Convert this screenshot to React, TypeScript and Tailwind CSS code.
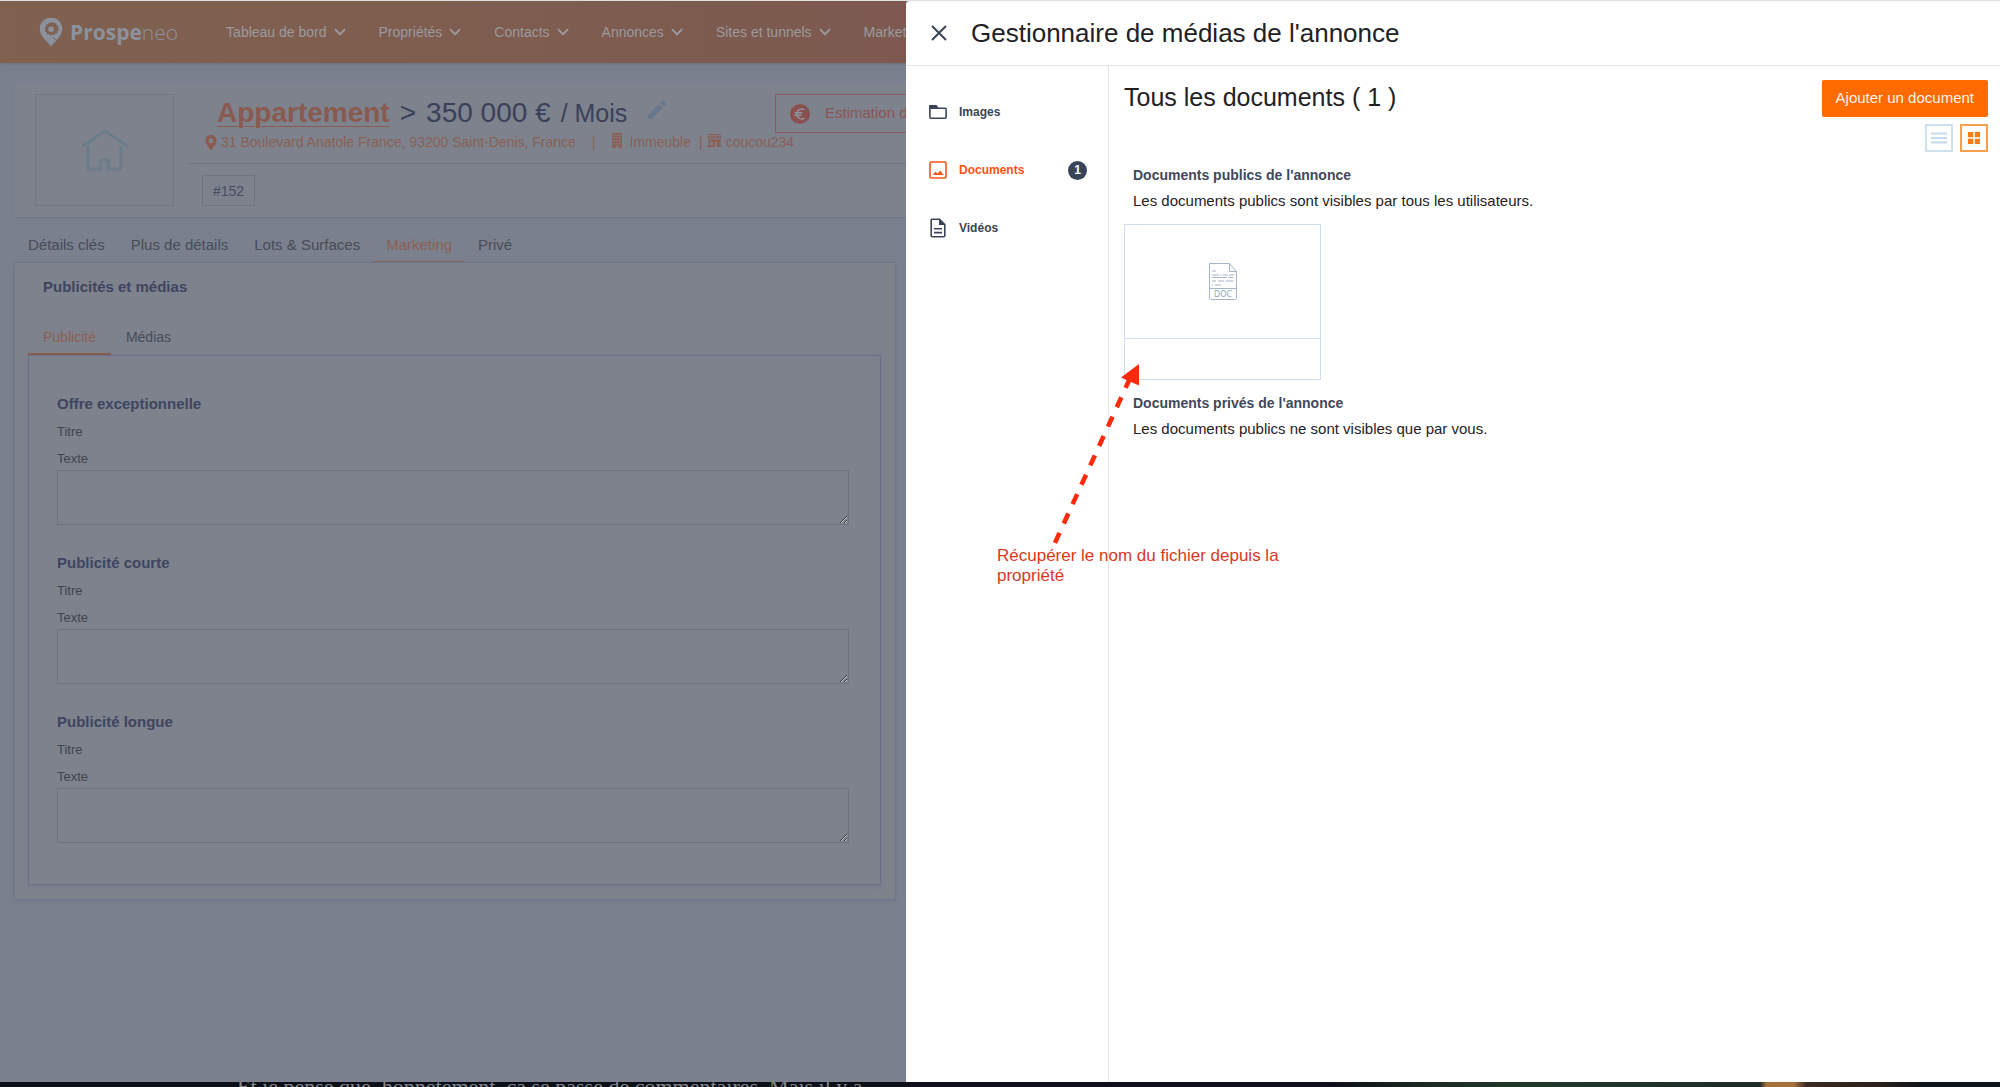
import React from 'react';
import { MdEdit } from 'react-icons/md';
import { FaMapMarkerAlt } from 'react-icons/fa';

const navItems = ['Tableau de bord', 'Propriétés', 'Contacts', 'Annonces', 'Sites et tunnels', 'Marketing'];
const tabs = ['Détails clés', 'Plus de détails', 'Lots & Surfaces', 'Marketing', 'Privé'];
const sections = ['Offre exceptionnelle', 'Publicité courte', 'Publicité longue'];

function Chevron() {
  return (
    <svg viewBox="0 0 12 8" className="h-2 w-3 shrink-0" fill="none" stroke="currentColor" strokeWidth="1.900" aria-hidden="true">
      <path d="M1 1.2 6 6.4 11 1.2" />
    </svg>
  );
}

function Logo() {
  return (
    <a href="#" className="flex shrink-0 items-center gap-[7px] text-[#8b929e]">
      <svg viewBox="0 0 24 30" className="h-[30px] w-6" aria-hidden="true">
        <path
          fill="currentColor"
          d="M12 .8C5.7.8.8 5.7.8 11.6c0 4 2 7.300 4.300 10.200L12 29.300l6.900-7.500c2.300-2.900 4.300-6.200 4.300-10.200C23.200 5.700 18.300.8 12 .8Z"
        />
        <path
          fill="#80614f"
          d="m10.500 5 1.500 1 1.500-1.200 1.300 1.500 2.200-.2.400 2 2 .8-.5 2 1.300 1.600-1.700 1.300.1 2.200-2.100.2-1 1.900-2-.7-1.700 1.300-1.400-1.500-2.200.2-.4-2-2-1 .8-1.900-1.100-1.800 1.600-1.300.1-2.200 2.100-.1z"
        />
        <circle cx="12" cy="12.200" r="2.800" fill="currentColor" />
        <path d="m13.500 20 5 4" stroke="#80614f" strokeWidth="1" />
      </svg>
      <span className="text-[21px] leading-7 [font-family:'Open_Sans',sans-serif]">
        <span className="font-bold">Prospe</span>
        <span className="font-light">neo</span>
      </span>
    </a>
  );
}

function TopNav() {
  return (
    <header className="flex h-[62px] shrink-0 items-center gap-12 bg-linear-to-r from-[#80614f] to-[#7d594f] pl-[39px] text-sm text-[#9b9a9e] shadow-sm">
      <Logo />
      <nav className="flex items-center gap-[33px]">
        {navItems.map((item) => (
          <button key={item} type="button" className="flex items-center gap-[7px]">
            {item}
            <Chevron />
          </button>
        ))}
      </nav>
    </header>
  );
}

function HouseIcon() {
  return (
    <svg viewBox="0 0 46 42" className="w-[46px]" fill="none" stroke="#6c7c8a" strokeWidth="3" strokeLinecap="round" strokeLinejoin="round" aria-hidden="true">
      <path d="M1.500 16.500 23 2l21.500 14.500M6 18.500V40h12.500V31h8v9H39V18.500" />
    </svg>
  );
}

function BuildingIcon() {
  return (
    <svg viewBox="0 0 10 15" className="mb-1 h-[15px] w-2.5 shrink-0" aria-hidden="true">
      <path
        fill="currentColor"
        fillRule="evenodd"
        d="M0 0h10v15H6.200v-2H3.800v2H0zM1.500 1.500V3H3V1.500zm2.800 0V3h1.500V1.500zm2.700 0V3h1.500V1.500zM1.500 4.300v1.500H3V4.300zm2.800 0v1.500h1.500V4.300zm2.700 0v1.500h1.500V4.300zM1.500 7.100v1.500H3V7.100zm2.800 0v1.500h1.500V7.100zm2.700 0v1.500h1.500V7.100zM1.500 9.900v1.500H3V9.900zm2.800 0v1.500h1.500V9.900zm2.700 0v1.500h1.500V9.900z"
      />
    </svg>
  );
}

function StoreIcon() {
  return (
    <svg viewBox="0 0 15 13" className="mx-1 mb-1 h-[13px] w-[15px] shrink-0" fill="currentColor" aria-hidden="true">
      <path d="M.8 0h13.400v1.200H.8zM.8 2h2v2.500h-2zM3.600 2h2.200v2.500H3.600zM6.500 2h2v2.500h-2zM9.200 2h2.200v2.500H9.200zM12.200 2h2v2.500h-2z" />
      <path fillRule="evenodd" d="M1.500 5.200h12V12H15v1h-5.200V8H8v5H0v-1h1.500zM3 8v3h3V8z" />
    </svg>
  );
}

function PropertyCard() {
  return (
    <section className="ml-3.5 mt-[21px] flex h-[133px] shrink-0 bg-[#7d828d] pl-[21px] pt-2.5 shadow-[0_1px_2px_#6f7b8c]">
      <div className="flex h-[112px] w-[139px] shrink-0 items-center justify-center border border-[#6e7887]">
        <HouseIcon />
      </div>
      <div className="ml-3.5 min-w-0 flex-1">
        <div className="flex h-[70px] items-start justify-between border-b border-[#6f7581] pl-[17px]">
          <div className="min-w-0">
            <h1 className="flex items-baseline gap-2.5 pl-3 text-[28px] leading-[38px] text-[#3a405a]">
              <a href="#" className="font-bold text-[#8a5a50] underline decoration-1 underline-offset-4">Appartement</a>
              <span>&gt;</span>
              <span>350 000 €</span>
              <span className="text-[25px]">/ Mois</span>
              <button type="button" aria-label="Modifier" className="ml-2 text-[#68778c]">
                <MdEdit className="size-6" />
              </button>
            </h1>
            <p className="flex items-center text-sm leading-5 text-[#8a6054]">
              <FaMapMarkerAlt className="mr-1 size-[15px] w-3 shrink-0 text-[#8a5a50]" />
              <a href="#">31 Boulevard Anatole France, 93200 Saint-Denis, France</a>
              <span className="mx-4">|</span>
              <BuildingIcon />
              <span className="ml-2">Immeuble</span>
              <span className="ml-2">|</span>
              <StoreIcon />
              <span>coucou234</span>
            </p>
          </div>
          <button type="button" className="-mr-10 flex h-[39px] w-[171px] shrink-0 items-center gap-[15px] border border-[#8c5a58] pl-3.5 text-[15px] text-[#8a5654]">
            <svg viewBox="0 0 20 20" className="size-5 shrink-0" aria-hidden="true">
              <circle cx="10" cy="10" r="10" fill="#8a504f" />
              <path d="M14.500 5.800A5 5 0 0 0 6.800 10a5 5 0 0 0 7.700 4.200M4.500 8.800h7.800M4.500 11.300h7.200" fill="none" stroke="#8d929c" strokeWidth="1.500" />
            </svg>
            Estimation du bien
          </button>
        </div>
        <span className="ml-3.5 mt-[11px] inline-flex h-[31px] items-center border border-[#6e7482] px-2.5 text-sm text-[#474d63]">#152</span>
      </div>
    </section>
  );
}

function AdSection({ title }: { title: string }) {
  return (
    <section className="flex flex-col text-[13px] text-[#40444f]">
      <h3 className="mb-[5px] text-[15px] font-bold leading-6 text-[#3f4560]">{title}</h3>
      <p className="mb-[5px] leading-[22px]">Titre</p>
      <label className="flex flex-col leading-[22px]">
        Texte
        <textarea className="h-[55px] resize-y border border-[#6d7280] bg-transparent" />
      </label>
    </section>
  );
}

function PropertyPage() {
  return (
    <div className="flex min-w-0 flex-1 flex-col overflow-hidden whitespace-nowrap bg-[#7b808e]">
      <TopNav />
      <PropertyCard />
      <div role="tablist" className="mt-[9px] flex pl-[15px] text-[15px] leading-[37px] text-[#474c59]">
        {tabs.map((tab) => (
          <button
            key={tab}
            type="button"
            role="tab"
            aria-selected={tab === 'Marketing'}
            className={
              tab === 'Marketing'
                ? 'h-[37px] border-b-2 border-[#895f53] px-[13px] text-[#8c6053]'
                : 'h-[37px] border-b-2 border-transparent px-[13px]'
            }
          >
            {tab}
          </button>
        ))}
      </div>
      <section className="ml-3.5 mr-2.5 -mt-px border border-[#6e788a] bg-[#7d828d] pb-3.5 pl-[13px] pr-3.5 pt-3 shadow-[0_1px_3px_#70778a]">
        <h2 className="pl-[15px] text-[15px] font-bold leading-6 text-[#3f4560]">Publicités et médias</h2>
        <div role="tablist" className="mt-[19px] flex text-sm leading-[38px] text-[#474c59]">
          <button type="button" role="tab" aria-selected="true" className="h-[37px] border-b-2 border-[#875c4e] px-[15px] text-[#8c6053]">Publicité</button>
          <button type="button" role="tab" aria-selected="false" className="h-[37px] border-b-2 border-transparent px-[15px]">Médias</button>
        </div>
        <div className="flex flex-col gap-[26px] border border-[#697088] pb-[41px] pl-7 pr-[31px] pt-9 shadow-[0_1px_4px_#72788a]">
          {sections.map((title) => (
            <AdSection key={title} title={title} />
          ))}
        </div>
      </section>
    </div>
  );
}

function FolderIcon() {
  return (
    <svg viewBox="0 0 18 14" className="h-3.5 w-[18px]" aria-hidden="true">
      <path d="M1.800 3.200h14.400a.9.900 0 0 1 .9.900v8.200a.9.900 0 0 1-.9.900H1.800a.9.900 0 0 1-.9-.9V2z" fill="none" stroke="currentColor" strokeWidth="1.600" />
      <path d="M1.500.1h6L9.300 2.400V4H.1V1.500A1.400 1.400 0 0 1 1.500.1Z" fill="currentColor" />
    </svg>
  );
}

function ImageIcon() {
  return (
    <svg viewBox="0 0 18 18" className="size-[18px]" aria-hidden="true">
      <rect x="1" y="1" width="16" height="16" rx="1" fill="none" stroke="currentColor" strokeWidth="1.600" />
      <path d="m3.800 14 2.700-3.400L8.600 12.800 11.200 9.400 14.600 14z" fill="currentColor" />
    </svg>
  );
}

function FileIcon() {
  return (
    <svg viewBox="0 0 16 20" className="mx-px h-5 w-4" aria-hidden="true">
      <path d="M2 1.200h7.500L14.800 6.500V17.800a1 1 0 0 1-1 1H2.200a1 1 0 0 1-1-1V2a.8.8 0 0 1 .8-.8Z" fill="none" stroke="currentColor" strokeWidth="1.600" />
      <path d="M9 1v6h6z" fill="currentColor" />
      <path d="M4 10.800h8M4 14.600h8" stroke="currentColor" strokeWidth="1.600" />
    </svg>
  );
}

function DocIcon() {
  return (
    <svg viewBox="0 0 28 37" className="h-[37px] w-7" fill="none" stroke="#a3b5ca" aria-hidden="true">
      <path d="M.5 35.500V.5h20l7 8v27c0 .600-.4 1-1 1h-25a1 1 0 0 1-1-1ZM20.500.5v8h7M.5 25.500h27" />
      <path d="M3 8h4M3 12h7M11.500 12h1M14 12h5M20 12h5M3 14.500h15M19.500 14.500h5M3 18h4M9 18h6M16.500 18h8M3 22h1M6 22h6" />
      <text x="14" y="34" textAnchor="middle" fill="#93a8c1" stroke="none" fontSize="8" className="[font-family:'DejaVu_Sans',sans-serif]">DOC</text>
    </svg>
  );
}

function DrawerNav() {
  return (
    <nav className="flex w-[203px] shrink-0 flex-col gap-[38px] border-r border-[#e2e4e8] pl-[23px] pr-[21px] pt-9 text-xs font-bold text-[#3a4459]">
      <button type="button" className="flex h-5 items-center gap-3">
        <FolderIcon />
        Images
      </button>
      <button type="button" className="flex h-5 items-center gap-3 text-[#fb5412]">
        <ImageIcon />
        Documents
        <span className="ml-auto flex size-[19px] items-center justify-center rounded-full bg-[#3a4459] text-white">1</span>
      </button>
      <button type="button" className="flex h-5 items-center gap-3">
        <FileIcon />
        Vidéos
      </button>
    </nav>
  );
}

function DocumentGroup({ title, text, children }: { title: string; text: string; children?: React.ReactNode }) {
  return (
    <section>
      <h3 className="pl-[9px] text-sm font-bold leading-[26px] text-[#3f485b]">{title}</h3>
      <p className="pl-[9px] text-[15px] leading-[26px] text-[#1f2124]">{text}</p>
      {children}
    </section>
  );
}

function Annotation() {
  return (
    <>
      <svg viewBox="0 0 90 184" className="absolute left-[143px] top-[361px] h-[184px] w-[90px]" aria-hidden="true">
        <path d="M82 14 5 183" stroke="#ff2a0b" strokeWidth="4.600" strokeDasharray="11 10.300" strokeDashoffset="-2" fill="none" />
        <path d="M90 2 72 15.500 90 23.500z" fill="#ff2a0b" />
      </svg>
      <p className="absolute left-[91px] top-[545px] w-[300px] text-[17px] leading-5 text-[#d9381e]">
        Récupérer le nom du fichier depuis la propriété
      </p>
    </>
  );
}

function MediaDrawer() {
  return (
    <aside className="relative flex w-[54.7%] shrink-0 flex-col rounded-tl bg-white">
      <header className="flex h-[65px] shrink-0 items-center gap-6 border-b border-[#e4e5e8] pl-[25px]">
        <button type="button" aria-label="Fermer">
          <svg viewBox="0 0 16 16" className="size-4" stroke="#3a4459" strokeWidth="2" aria-hidden="true">
            <path d="m1 1 14 14M15 1 1 15" />
          </svg>
        </button>
        <h2 className="text-[26px] leading-8 text-[#1f2124]">Gestionnaire de médias de l'annonce</h2>
      </header>
      <div className="flex min-h-0 flex-1">
        <DrawerNav />
        <main className="min-w-0 flex-1 pl-[15px] pr-3 pt-3.5">
          <div className="flex items-start justify-between">
            <h2 className="text-[25px] leading-[34px] text-[#1f2124]">Tous les documents ( 1 )</h2>
            <div className="flex flex-col items-end gap-[7px]">
              <button type="button" className="h-[37px] rounded-xs bg-[#ff6b00] px-3.5 text-[15px] text-[#fff3e8]">Ajouter un document</button>
              <div className="flex gap-[7px]">
                <button type="button" aria-label="Liste" className="flex size-7 items-center justify-center border-2 border-[#cfe0ef]">
                  <svg viewBox="0 0 16 12" className="w-4" stroke="#c4daec" strokeWidth="2" aria-hidden="true">
                    <path d="M0 1.500h16M0 6h16M0 10.500h16" />
                  </svg>
                </button>
                <button type="button" aria-label="Grille" className="flex size-7 items-center justify-center border-2 border-[#f5a04e]">
                  <svg viewBox="0 0 12 12" className="w-3" fill="#fd7d10" aria-hidden="true">
                    <path d="M0 0h5.200v5.200H0zM6.800 0H12v5.200H6.800zM0 6.800h5.200V12H0zM6.800 6.800H12V12H6.800z" />
                  </svg>
                </button>
              </div>
            </div>
          </div>
          <div className="mt-2.5 flex flex-col gap-2.5">
            <DocumentGroup title="Documents publics de l'annonce" text="Les documents publics sont visibles par tous les utilisateurs.">
              <article className="mt-2.5 h-[156px] w-[197px] border border-[#cfdeee]">
                <div className="flex h-[114px] items-center justify-center border-b border-[#cfdeee]">
                  <DocIcon />
                </div>
              </article>
            </DocumentGroup>
            <DocumentGroup title="Documents privés de l'annonce" text="Les documents publics ne sont visibles que par vous." />
          </div>
        </main>
      </div>
      <Annotation />
    </aside>
  );
}

function DesktopEdge() {
  return (
    <footer className="relative flex h-[5px] shrink-0 overflow-hidden bg-[#0d1019]">
      <p className="absolute -top-1.5 left-[237px] whitespace-nowrap text-[22px] leading-[22px] text-[#85868c] [font-family:'Liberation_Serif',serif]">
        Et je pense que, honnetement, ça se passe de commentaires. Mais il y a
      </p>
      <div className="ml-auto h-full w-1/3 bg-[linear-gradient(to_right,#0d1019,#1d2b22_15%,#22382a_30%,#1f2b28_64%,#a8713c_65%,#a8713c_69%,#3a2a22_71%,#2a201c_82%,#10151a_88%,#10151a)]" />
    </footer>
  );
}

export default function App() {
  return (
    <div className="flex h-screen flex-col overflow-hidden border-t border-[#dfe0e2] bg-[#7b808e] [font-family:'Liberation_Sans',Arial,sans-serif]">
      <div className="flex min-h-0 flex-1">
        <PropertyPage />
        <MediaDrawer />
      </div>
      <DesktopEdge />
    </div>
  );
}
